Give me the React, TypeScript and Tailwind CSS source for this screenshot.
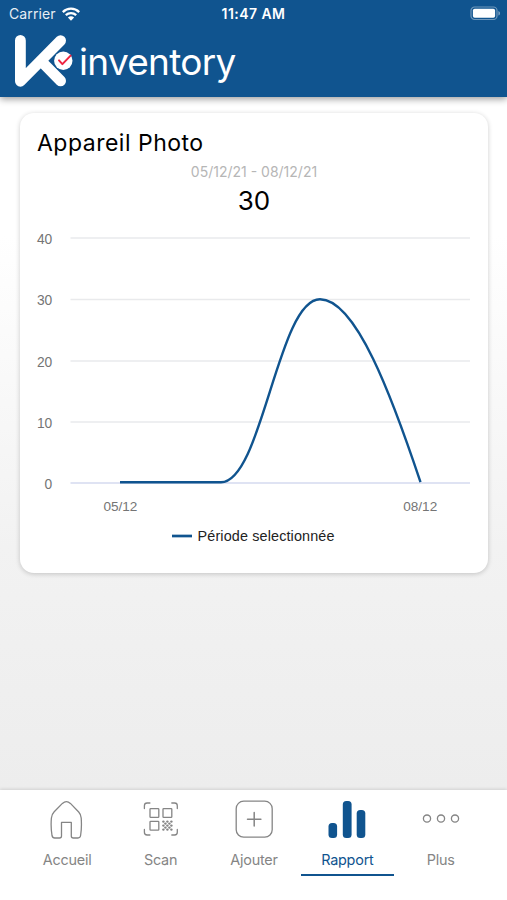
import type { ReactNode } from 'react';

const SANS = "font-['Inter','Liberation_Sans',sans-serif]";

function StatusBar() {
  return (
    <div className="grid h-[27px] grid-cols-3 items-center px-[9px] text-white">
      <div className="flex items-center gap-[6px]">
        <span className="text-[14px] leading-[27px] tracking-[0.1px] opacity-90">Carrier</span>
        <svg width="18" height="14" viewBox="0 0 18 14" fill="none" stroke="white" strokeWidth="2.3">
          <path d="M0.8 5.1C5.4 0.5 12.6 0.5 17.2 5.1" />
          <path d="M3.8 8.2C6.8 5.3 11.2 5.3 14.2 8.2" />
          <path d="M9 13.8L5.9 10.5C7.6 8.9 10.4 8.9 12.1 10.5Z" fill="white" stroke="none" />
        </svg>
      </div>
      <span className="pt-px text-center text-[14px] font-semibold leading-[26px] tracking-[0.45px]">11:47 AM</span>
      <div className="flex justify-end">
        <svg className="-mr-[3px]" width="31" height="15" viewBox="0 0 31 15">
          <rect x="1" y="1" width="26" height="12.5" rx="3.6" fill="none" stroke="white" strokeOpacity="0.4" strokeWidth="1.2" />
          <rect x="2.9" y="2.8" width="22.2" height="9" rx="1.8" fill="white" />
          <path d="M28.4 5V9.6C30.6 8.8 30.6 5.8 28.4 5Z" fill="white" fillOpacity="0.45" />
        </svg>
      </div>
    </div>
  );
}

function Header() {
  return (
    <header className="relative z-10 h-[97px] shrink-0 bg-[#10548f] shadow-[0_2px_7px_rgba(0,0,0,0.4)]">
      <StatusBar />
      <div className="flex h-[70px] pl-[15px]">
        <svg className="mt-[8px] shrink-0" width="58" height="52" viewBox="15 35 58 52">
          <g stroke="white" strokeWidth="10.8" strokeLinecap="round" strokeLinejoin="round" fill="none">
            <path d="M20.4 40.4V81.3L60.6 40.6" />
            <path d="M41 61L60.6 80.9" />
          </g>
          <circle cx="63.3" cy="60.7" r="10.2" fill="#10548f" />
          <circle cx="63.3" cy="60.7" r="9.2" fill="white" />
          <path d="M59 60.4L62.4 64.1L70.6 55.6" fill="none" stroke="#ee2440" strokeWidth="2" strokeLinecap="round" strokeLinejoin="round" />
        </svg>
        <span className="ml-[6px] mt-[11px] text-[37px] leading-[48px] tracking-[-0.7px] text-white">inventory</span>
      </div>
    </header>
  );
}

const TICKS = [
  { label: '40', y: 12 },
  { label: '30', y: 73.5 },
  { label: '20', y: 135 },
  { label: '10', y: 196 },
  { label: '0', y: 257 },
];

function Chart() {
  return (
    <svg className="block font-['Liberation_Sans',Arial,sans-serif]" width="468" height="326" viewBox="0 0 468 326">
      {TICKS.map((tick) => (
        <g key={tick.label}>
          <path d={`M50.5 ${tick.y}H450`} stroke={tick.label === '0' ? '#dfe3f3' : '#e9eaec'} strokeWidth={tick.label === '0' ? 2 : 1.5} />
          <text x="32.3" y={tick.y + 5.5} textAnchor="end" fontSize="13.8" fill="#757575">
            {tick.label}
          </text>
        </g>
      ))}
      <path d="M100 256.2H201C242 256.2 258 73.3 300 73.3C336 73.3 372 171 400.5 256.2" fill="none" stroke="#10548f" strokeWidth="2.4" />
      <g fontSize="13.6" fill="#757575" textAnchor="middle">
        <text x="100.4" y="285">05/12</text>
        <text x="400.2" y="285">08/12</text>
      </g>
      <path d="M152 310H172" stroke="#10548f" strokeWidth="2.7" />
      <text x="177.5" y="315" fontSize="14.4" textLength="137" fill="#222222">Période selectionnée</text>
    </svg>
  );
}

function ReportCard() {
  return (
    <section className="ml-[20px] mt-[16px] h-[460px] w-[468px] rounded-[14px] bg-white shadow-[0_1px_5px_rgba(0,0,0,0.2)]">
      <h1 className="pl-[17px] pt-[15px] text-[23px] leading-[30px] tracking-[0.5px] text-black">Appareil Photo</h1>
      <p className="pt-[3px] text-center text-[14px] leading-[22px] text-[#b6b6b6]">05/12/21 - 08/12/21</p>
      <p className="text-center text-[26px] leading-[36px] text-black">30</p>
      <div className="mt-[7px]">
        <Chart />
      </div>
    </section>
  );
}

function TabItem({ label, active = false, children }: { label: string; active?: boolean; children: ReactNode }) {
  return (
    <button
      className={`flex h-[86px] w-[93.4px] flex-col items-center border-b-2 pt-[9px] ${
        active ? 'border-[#10548f] text-[#10548f]' : 'border-transparent text-[#858585]'
      }`}
    >
      <svg width="44" height="42" viewBox="0 0 44 42" fill="none" stroke="currentColor" strokeWidth="1.3" strokeLinejoin="round" strokeLinecap="round">
        {children}
      </svg>
      <span className="mt-[8px] text-[14.4px] leading-[22px] tracking-[-0.2px]">{label}</span>
    </button>
  );
}

function TabBar() {
  return (
    <nav className="z-10 flex h-[110px] shrink-0 justify-center bg-white pl-px shadow-[0_-1px_3px_rgba(0,0,0,0.12)]">
      <TabItem label="Accueil">
        <path d="M9.7 39H14.5Q16.5 39 16.5 37V23.4H26.3V37Q26.3 39 28.3 39H33Q35.2 39 35.6 36.5C36.6 30.5 36.6 24.5 36.2 19Q36 15.5 33.7 13L25.4 4.4Q21.4 0.8 17.4 4.4L9.2 12.7Q6.7 15.3 6.4 19C5.9 24.5 6 30.5 7 36.5Q7.5 39 9.7 39Z" />
      </TabItem>
      <TabItem label="Scan">
        <path d="M5.4 9.5V6.7Q5.4 4 8.1 4H10.9M32.8 4H35.6Q38.3 4 38.3 6.7V9.5M5.4 30.5V33.3Q5.4 36 8.1 36H10.9M32.8 36H35.6Q38.3 36 38.3 33.3V30.5" />
        <rect x="11" y="9.6" width="8.8" height="8.8" rx="0.7" />
        <rect x="24" y="9.6" width="8.8" height="8.8" rx="0.7" />
        <rect x="11" y="22.4" width="8.8" height="8.8" rx="0.7" />
        <g fill="currentColor" stroke="none">
          {[0, 1, 2, 3, 4].map((row) =>
            [0, 1, 2, 3, 4]
              .filter((col) => (row + col) % 2 === 0)
              .map((col) => <circle key={`${row}-${col}`} cx={24.4 + col * 2} cy={22.6 + row * 2} r="1.2" />),
          )}
        </g>
      </TabItem>
      <TabItem label="Ajouter">
        <rect x="4.2" y="2.2" width="36" height="36" rx="7.5" />
        <path d="M15.5 20.2H28.9M22.2 13.5V26.9" strokeWidth="1.5" />
      </TabItem>
      <TabItem label="Rapport" active>
        <g fill="currentColor" stroke="none">
          <rect x="3.5" y="24" width="8.6" height="15" rx="3.5" />
          <rect x="17.8" y="2" width="8.8" height="37" rx="3.5" />
          <rect x="31.7" y="11" width="8.6" height="28" rx="3.5" />
        </g>
      </TabItem>
      <TabItem label="Plus">
        <circle cx="8" cy="19.6" r="3.6" />
        <circle cx="22" cy="19.6" r="3.6" />
        <circle cx="36" cy="19.6" r="3.6" />
      </TabItem>
    </nav>
  );
}

export default function App() {
  return (
    <div className={`flex h-[900px] w-[507px] flex-col overflow-hidden bg-white ${SANS}`}>
      <Header />
      <main className="min-h-0 flex-1 bg-linear-to-b from-white from-20% via-[#f2f2f2] via-65% to-[#ededed]">
        <ReportCard />
      </main>
      <TabBar />
    </div>
  );
}
